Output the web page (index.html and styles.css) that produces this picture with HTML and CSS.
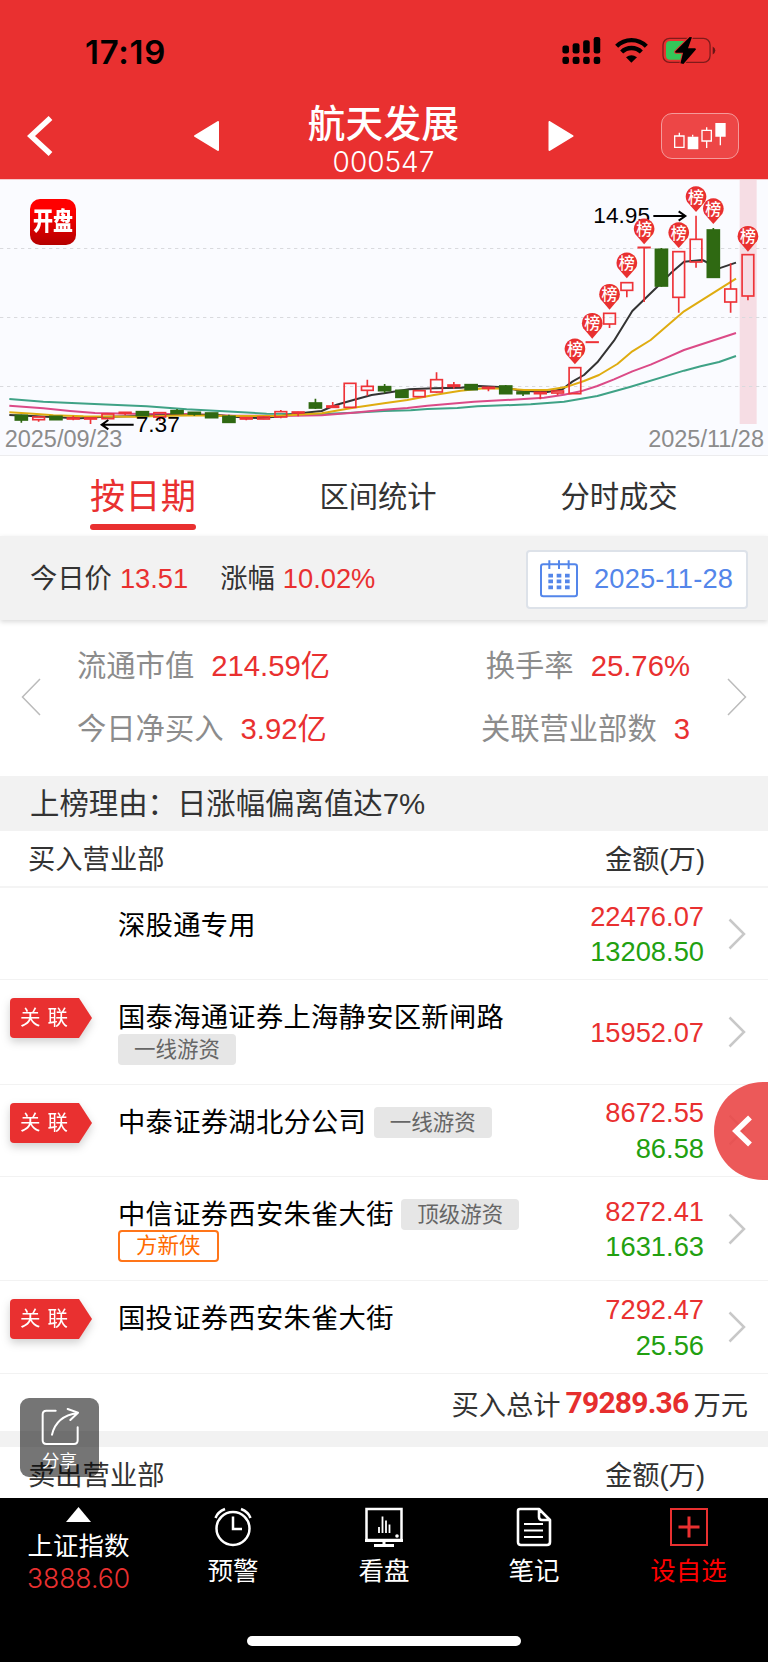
FILE: index.html
```html
<!DOCTYPE html>
<html lang="zh-CN">
  <head>
    <meta charset="utf-8">
    <title>航天发展 000547</title>
    <meta name="viewport" content="width=device-width, initial-scale=1">
    <link rel="stylesheet" href="styles.css">
  </head>
  <body>
    <header class="header">
      <div class="status-bar">
        <span class="time">17:19</span>
        <div class="status-icons">
          <svg width="39" height="27" viewBox="0 0 116 82">
            <rect x="0" y="26" width="20" height="24" rx="7"/>
            <rect x="31" y="19" width="21" height="31" rx="7"/>
            <rect x="63" y="10" width="20" height="40" rx="7"/>
            <rect x="95" y="0" width="20" height="50" rx="7"/>
            <rect x="0" y="60" width="20" height="22" rx="7"/>
            <rect x="31" y="60" width="21" height="22" rx="7"/>
            <rect x="63" y="60" width="20" height="22" rx="7"/>
            <rect x="95" y="60" width="20" height="22" rx="7"/>
          </svg>
          <svg class="wifi" width="33" height="25" viewBox="0 0 99 75">
            <path d="M5 25A63 63 0 0 1 94 25" fill="none" stroke="#000" stroke-width="13"/>
            <path d="M20 42A42 42 0 0 1 79 42" fill="none" stroke="#000" stroke-width="13"/>
            <path d="M33 58Q49 45 66 58L49 74Z"/>
          </svg>
          <svg width="54" height="27" viewBox="0 0 162 82">
            <rect x="2" y="4" width="143" height="73" rx="20" fill="none" stroke="#000" stroke-opacity=".45" stroke-width="4"/>
            <path d="M153 29Q161 34 161 41Q161 48 153 53Z" fill-opacity=".55"/>
            <path d="M24 12H70V69H24Q11 69 11 56V25Q11 12 24 12Z" fill="#34c759"/>
            <path d="M83 0L39 44Q38 47 41 48H63L55 80L64 82L102 38Q103 35 99 34H78L90 1Z" stroke="#e93030" stroke-width="6" paint-order="stroke"/>
          </svg>
        </div>
      </div>
      <div class="nav">
        <svg class="back" width="26" height="40" viewBox="0 0 26 40"><path d="M23.500 2L4 20L23.500 38" fill="none" stroke="#fff" stroke-width="5.500"/></svg>
        <svg class="prev" width="25" height="30" viewBox="0 0 25 30"><path d="M24 1V29L1 15Z" fill="#fff" stroke="#fff" stroke-width="2" stroke-linejoin="round"/></svg>
        <div class="title">
          <h1>航天发展</h1>
          <p>000547</p>
        </div>
        <svg class="next" width="26" height="30" viewBox="0 0 25 30"><path d="M1 1V29L24 15Z" fill="#fff" stroke="#fff" stroke-width="2" stroke-linejoin="round"/></svg>
        <button class="kline-btn">
          <svg width="52" height="28" viewBox="0 0 156 84" fill="none" stroke="#fff" stroke-width="4">
            <path d="M2 42H30V76H2ZM16 32V42M84 25H112V57H84ZM98 16V25M98 57V78M56 38V44M139 42V70"/>
            <path d="M43 46H71V80H43ZM126 5H153V42H126Z" fill="#fff"/>
          </svg>
        </button>
      </div>
    </header>

    <div class="chart">
      <svg id="kline" width="768" height="275" viewBox="0 0 2304 825">
        <rect class="today" x="2219" y="0" width="51" height="732"/>
        <path class="grid-line" d="M0 205.500H2304M0 412.500H2304M0 619.500H2304"/>
        <g class="ma">
          <polyline stroke="#3fa286" points="28,657 130,665 300,673 440,679 560,688 700,695 800,701 965,702 1060,698 1152,693 1232,691 1282,687 1372,684 1432,679 1592,673 1692,665 1792,648 1892,620 2052,572 2102,559 2157,546 2208,528"/>
          <polyline stroke="#db4a87" points="28,677 130,685 210,693 285,699 430,702 560,702 700,707 840,708 965,706 1060,698 1152,689 1222,684 1282,677 1422,665 1502,661 1632,653 1692,644 1742,634 1792,618 1842,598 1897,574 1952,554 2002,532 2052,510 2208,459"/>
          <polyline stroke="#333" points="28,705 110,709 200,713 240,715 300,711 420,708 500,706 640,704 700,710 770,714 830,710 900,700 965,693 1010,674 1060,660 1115,645 1152,640 1227,628 1302,625 1382,623 1437,618 1512,622 1562,632 1642,636 1687,628 1717,605 1752,585 1792,547 1842,482 1897,393 1972,320 2012,280 2052,245 2107,240 2157,265 2208,248"/>
          <polyline stroke="#dfac10" points="28,697 100,701 160,706 250,709 400,710 560,706 700,708 830,708 965,700 1060,683 1152,670 1222,660 1302,645 1382,632 1452,625 1522,626 1572,630 1642,630 1702,620 1752,603 1797,585 1852,552 1897,514 1952,480 2052,394 2208,296"/>
        </g>
        <g id="candles"></g>
        <text class="price" x="1780" y="129">14.95</text>
        <path class="arrow" d="M1960 108H2055M2036 94L2056 108L2036 122"/>
        <g id="pins"></g>
        <text class="price" x="407" y="755">7.37</text>
        <path class="arrow" d="M401 734H306M325 720L305 734L325 748"/>
        <text class="date" x="14" y="801">2025/09/23</text>
        <text class="date" x="2292" y="801" text-anchor="end">2025/11/28</text>
      </svg>
      <div class="logo"><span>开盘</span></div>
    </div>

    <div class="tabs">
      <a class="tab active">按日期</a>
      <a class="tab">区间统计</a>
      <a class="tab">分时成交</a>
    </div>

    <div class="quote">
      <span>今日价</span><b>13.51</b>
      <span class="change">涨幅</span><b>10.02%</b>
      <div class="date-picker">
        <svg width="38" height="38" viewBox="0 0 114 114" fill="none" stroke="#5486ea">
          <rect x="3" y="13" width="108" height="96" rx="7" stroke-width="6"/>
          <path d="M28 1V27M57 1V27M86 1V27" stroke-width="6"/>
          <path d="M25 47H90M25 64H90M25 82H90" stroke-width="11" stroke-dasharray="14 11"/>
        </svg>
        2025-11-28
      </div>
    </div>

    <div class="metrics">
      <svg width="20" height="38" viewBox="0 0 20 38"><path d="M19 1L1.500 19L19 37" fill="none" stroke="#bbb" stroke-width="1.500"/></svg>
      <div class="metrics-col">
        <p>流通市值<b>214.59亿</b></p>
        <p>今日净买入<b>3.92亿</b></p>
      </div>
      <div class="metrics-col right">
        <p>换手率<b>25.76%</b></p>
        <p>关联营业部数<b>3</b></p>
      </div>
      <svg width="20" height="38" viewBox="0 0 20 38"><path d="M1 1L18.500 19L1 37" fill="none" stroke="#bbb" stroke-width="1.500"/></svg>
    </div>

    <div class="reason">上榜理由：日涨幅偏离值达7%</div>

    <div class="list-head"><span>买入营业部</span><span>金额(万)</span></div>

    <div class="row">
      <div class="badge-col"></div>
      <div class="broker"><span>深股通专用</span></div>
      <div class="amount"><span class="buy">22476.07</span><span class="sell">13208.50</span></div>
      <svg class="more" width="18" height="32" viewBox="0 0 18 32"><path d="M1.500 1.500L16 16L1.500 30.500"/></svg>
    </div>
    <div class="row">
      <div class="badge-col"><span class="badge">关联</span></div>
      <div class="broker"><span>国泰海通证券上海静安区新闸路</span><i class="tag">一线游资</i></div>
      <div class="amount"><span class="buy">15952.07</span></div>
      <svg class="more" width="18" height="32" viewBox="0 0 18 32"><path d="M1.500 1.500L16 16L1.500 30.500"/></svg>
    </div>
    <div class="row">
      <div class="badge-col"><span class="badge">关联</span></div>
      <div class="broker"><span>中泰证券湖北分公司</span><i class="tag">一线游资</i></div>
      <div class="amount"><span class="buy">8672.55</span><span class="sell">86.58</span></div>
      <svg class="more" width="18" height="32" viewBox="0 0 18 32"><path d="M1.500 1.500L16 16L1.500 30.500"/></svg>
    </div>
    <div class="row">
      <div class="badge-col"></div>
      <div class="broker"><span>中信证券西安朱雀大街</span><i class="tag">顶级游资</i><i class="tag person">方新侠</i></div>
      <div class="amount"><span class="buy">8272.41</span><span class="sell">1631.63</span></div>
      <svg class="more" width="18" height="32" viewBox="0 0 18 32"><path d="M1.500 1.500L16 16L1.500 30.500"/></svg>
    </div>
    <div class="row">
      <div class="badge-col"><span class="badge">关联</span></div>
      <div class="broker"><span>国投证券西安朱雀大街</span></div>
      <div class="amount"><span class="buy">7292.47</span><span class="sell">25.56</span></div>
      <svg class="more" width="18" height="32" viewBox="0 0 18 32"><path d="M1.500 1.500L16 16L1.500 30.500"/></svg>
    </div>
    <div class="total">买入总计<b>79289.36</b>万元</div>

    <div class="list-head sell-head"><span>卖出营业部</span><span>金额(万)</span></div>

    <!-- floating buttons -->
    <div class="share">
      <svg width="38" height="38" viewBox="0 0 114 114" fill="none" stroke="#fff" stroke-width="6" stroke-linecap="round" stroke-linejoin="round">
        <path d="M44 8H16Q5 8 5 19V97Q5 108 16 108H99Q110 108 110 97V58"/>
        <path d="M33 80C40 50 58 22 110 15M80 3L111 14L88 36"/>
      </svg>
      <span>分享</span>
    </div>
    <div class="drawer-btn">
      <svg width="20" height="32" viewBox="0 0 20 32"><path d="M18 2.500L4 16L18 29.500" fill="none" stroke="#fff" stroke-width="5.500"/></svg>
    </div>

    <footer class="footer">
      <div class="toolbar">
        <div class="tool index">
          <svg width="25" height="15" viewBox="0 0 25 15"><path d="M12.500 0L25 15H0Z" fill="#fff"/></svg>
          <span>上证指数</span>
          <em>3888.60</em>
        </div>
        <div class="tool">
          <svg width="38" height="40" viewBox="0 0 38 40" fill="none" stroke="#fff" stroke-width="2.500">
            <circle cx="19" cy="21.500" r="16.500"/>
            <path d="M19 9.500V22H28M1.500 11Q3.500 5 11 2M36.500 11Q34.500 5 27 2"/>
          </svg>
          <span>预警</span>
        </div>
        <div class="tool">
          <svg width="38" height="40" viewBox="0 0 38 40" fill="none" stroke="#fff" stroke-width="2.500">
            <rect x="1.500" y="2" width="35" height="31"/>
            <path d="M0 33.500H38M19 34V38M9 38.500H29" stroke-width="3"/>
            <path d="M14 26V20M17.500 26V9.500M21 26V13.500M24.500 26V17.500" stroke-width="1.800"/>
            <circle cx="32" cy="29" r="1.800" fill="#fff" stroke="none"/>
          </svg>
          <span>看盘</span>
        </div>
        <div class="tool">
          <svg width="36" height="40" viewBox="0 0 36 40" fill="none" stroke="#fff" stroke-width="2.600" stroke-linejoin="round">
            <path d="M4 2H23L34 13V35Q34 38 31 38H5Q2 38 2 35V4Q2 2 4 2ZM23 2V10Q23 13 26 13H34"/>
            <path d="M8 17H27M8 23.500H27M8 30H27" stroke-width="2"/>
          </svg>
          <span>笔记</span>
        </div>
        <div class="tool add">
          <svg width="38" height="40" viewBox="0 0 38 40" fill="none" stroke="#e93030">
            <rect x="1" y="2" width="36" height="36" stroke-width="2"/>
            <path d="M19 9.500V30.500M8.500 20H29.500" stroke-width="3"/>
          </svg>
          <span>设自选</span>
        </div>
      </div>
      <div class="home-bar"></div>
    </footer>

    <script>
      // [type, body top, body bottom, high, low] - r = up, g = down
      const candles = [
        ['g', 706, 720, 704, 728], ['r', 711, 719, 709, 725], ['g', 709, 719, 709, 719],
        ['r', 714, 717, 707, 721], ['r', 714, 717, 713, 732], ['r', 702, 716, 701, 717],
        ['r', 697, 700, 696, 706], ['g', 695, 707, 695, 707], ['r', 698, 711, 697, 722],
        ['g', 692, 700, 687, 702], ['g', 697, 702, 696, 707], ['g', 699, 713, 699, 713],
        ['g', 709, 727, 704, 727], ['r', 713, 717, 712, 721], ['r', 711, 717, 709, 718],
        ['r', 695, 711, 690, 715], ['r', 696, 699, 695, 709], ['g', 669, 684, 656, 687],
        ['r', 678, 682, 666, 684], ['r', 610, 682, 609, 683], ['r', 619, 631, 599, 647],
        ['g', 620, 632, 612, 640], ['g', 631, 652, 630, 652], ['r', 632, 650, 631, 651],
        ['r', 599, 636, 577, 638], ['r', 615, 619, 606, 626], ['g', 614, 629, 613, 629],
        ['r', 622, 625, 620, 634], ['g', 618, 641, 615, 641], ['g', 636, 641, 635, 648],
        ['r', 637, 641, 635, 658], ['r', 633, 639, 632, 646], ['r', 563, 641, 563, 641],
        ['r', 486, 487, 486, 487], ['r', 400, 432, 400, 444], ['r', 308, 331, 308, 352],
        ['r', 202, 203, 202, 366], ['g', 208, 318, 204, 320], ['r', 215, 352, 214, 398],
        ['r', 178, 246, 107, 263], ['g', 150, 292, 144, 294], ['r', 327, 366, 250, 398],
        ['r', 224, 348, 224, 361]
      ];
      // candle index -> y of the pin centre
      const pins = { 32: 507, 33: 430, 34: 343, 35: 249, 36: 147, 38: 158, 39: 50, 40: 86, 42: 169 };
      const xOf = i => 64 + i * 51.9;

      document.getElementById('candles').innerHTML = candles.map(([type, top, bottom, high, low], i) => {
        const x = xOf(i);
        const w = type === 'g' ? 36 : 35;
        return `<g class="${type}">
          <path d="M${x} ${high}V${top}M${x} ${bottom}V${low}"/>
          <rect x="${x - w / 2}" y="${top}" width="${w}" height="${bottom - top}"/>
        </g>`;
      }).join('');

      document.getElementById('pins').innerHTML = Object.keys(pins).map(i => {
        const x = xOf(i);
        const y = pins[i];
        return `<path class="pin" d="M${x - 27} ${y + 15}A31 31 0 1 1 ${x + 27} ${y + 15}Q${x + 14} ${y + 30} ${x} ${y + 46}Q${x - 14} ${y + 30} ${x - 27} ${y + 15}Z"/>
          <text class="pin-text" x="${x}" y="${y + 18}">榜</text>`;
      }).join('');
    </script>
  </body>
</html>
```
FILE: styles.css
```css
* {
    box-sizing: border-box;
}

body {
    position: relative;
    width: 768px;
    height: 1663px;
    margin: 0;
    overflow: hidden;
    background: #fff;
    color: #333;
    font-family: "Liberation Sans", "Noto Sans CJK SC", sans-serif;
    font-size: 27.3px;
}

h1, p {
    margin: 0;
}

svg {
    display: block;
    flex-shrink: 0;
}

b, i, em {
    font-weight: 400;
    font-style: normal;
}

/* header */
.header {
    height: 180px;
    background: #e93030;
    border-bottom: 1px solid #f5c9cc;
}

.status-bar {
    display: flex;
    justify-content: space-between;
    height: 93px;
    padding: 0 52px 0 85px;
}

.time {
    margin-top: 32px;
    color: #000;
    font: 600 33px/40px Inter, sans-serif;
    letter-spacing: 0.7px;
}

.status-icons {
    display: flex;
    align-items: flex-start;
    gap: 14px;
    padding-top: 37px;
}

.wifi {
    margin-top: 1px;
}

.nav {
    display: flex;
    align-items: center;
    height: 86px;
    padding: 0 29px 0 27px;
}

.prev {
    margin-left: 141px;
}

.title {
    flex: 1;
    padding-top: 7px;
    color: #fff;
    text-align: center;
}

.title h1 {
    font-size: 37.5px;
    font-weight: 500;
    line-height: 44px;
    letter-spacing: 0.4px;
}

.title p {
    font: 300 28px/32px Inter, sans-serif;
}

.kline-btn {
    display: flex;
    align-items: center;
    justify-content: center;
    width: 78px;
    height: 46px;
    margin-left: 87px;
    padding: 0;
    border: 1px solid #f49a9a;
    border-radius: 11px;
    background: #ed4646;
}

/* k-line chart */
.chart {
    position: relative;
    height: 276px;
    background: #fafbff;
    border-bottom: 1px solid #ececee;
}

.logo {
    position: absolute;
    top: 19px;
    left: 30px;
    width: 46px;
    height: 46px;
    border-radius: 10px;
    background: linear-gradient(#ff0000 25%, #b40000);
    color: #fff;
    font-size: 20px;
    font-weight: 900;
    line-height: 45px;
    text-align: center;
}

.logo span {
    display: block;
    transform: scaleY(1.25);
}

.today {
    fill: #f6dde4;
}

.grid-line {
    stroke: #d9dade;
    stroke-width: 3;
    stroke-dasharray: 10 11;
}

.ma polyline {
    fill: none;
    stroke-width: 6;
    stroke-linejoin: round;
}

.r {
    fill: none;
    stroke: #ee3338;
    stroke-width: 5;
}

.g {
    fill: #2f6912;
    stroke: #2f6912;
    stroke-width: 5;
}

.price {
    fill: #000;
    font-size: 68px;
}

.date {
    fill: #8c8c8c;
    font-size: 70.5px;
}

.arrow {
    fill: none;
    stroke: #000;
    stroke-width: 6;
}

.pin {
    fill: #e93030;
}

.pin-text {
    fill: #fff;
    font-size: 48px;
    font-weight: 500;
    text-anchor: middle;
}

/* tabs */
.tabs {
    display: grid;
    grid-template-columns: 286px 184px 298px;
    justify-items: center;
    height: 80px;
}

.tab {
    height: 74px;
    font-size: 29.3px;
    line-height: 81px;
}

.tab.active {
    color: #e93030;
    font-size: 35.3px;
}

.tab.active::after {
    content: "";
    display: block;
    height: 6px;
    margin-top: -13px;
    border-radius: 3px;
    background: #e93030;
}

/* price bar */
.quote {
    position: relative;
    display: flex;
    align-items: center;
    height: 84px;
    padding: 2px 20px 0 30px;
    background: #f2f2f2;
    box-shadow: 0 2px 5px rgba(0, 0, 0, 0.15);
    line-height: 40px;
}

.quote b {
    margin-left: 8px;
    color: #e93030;
}

.change {
    margin-left: 32px;
}

.date-picker {
    display: flex;
    align-items: center;
    gap: 16px;
    width: 222px;
    height: 59px;
    margin-left: auto;
    padding-left: 12px;
    border: 2px solid #dde2e9;
    border-radius: 4px;
    background: #fff;
    color: #5486ea;
    letter-spacing: 0.15px;
    white-space: nowrap;
}

/* metrics */
.metrics {
    display: flex;
    align-items: center;
    height: 156px;
    padding: 0 21px 2px;
    color: #8c8c8c;
    font-size: 29.3px;
}

.metrics-col {
    margin-left: 36px;
    line-height: 63.5px;
}

.metrics-col.right {
    margin-left: auto;
    margin-right: 37px;
    text-align: right;
}

.metrics b {
    margin-left: 17px;
    color: #e93030;
}

.reason {
    height: 55px;
    padding-left: 30px;
    background: #f2f2f2;
    font-size: 29.4px;
    line-height: 55px;
}

/* broker list */
.list-head {
    display: flex;
    justify-content: space-between;
    height: 57px;
    padding: 0 63px 0 28px;
    border-bottom: 2px solid #f4f4f4;
    line-height: 57px;
}

.row {
    display: flex;
    min-height: 92.4px;
    border-bottom: 1.5px solid #f2f2f2;
}

.badge-col {
    width: 118px;
    padding: 18px 0 0 10px;
}

.badge {
    position: relative;
    display: block;
    width: 69px;
    height: 40px;
    padding-left: 10px;
    border-radius: 4px 0 0 4px;
    background: #e93030;
    color: #fff;
    filter: drop-shadow(0 4px 4px rgba(0, 0, 0, 0.18));
    font-size: 20.5px;
    letter-spacing: 7px;
    line-height: 40px;
    white-space: nowrap;
}

.badge::after {
    content: "";
    position: absolute;
    top: 0;
    left: 69px;
    border: solid transparent;
    border-width: 20px 0 20px 13px;
    border-left-color: #e93030;
}

.broker {
    display: flex;
    flex-wrap: wrap;
    align-content: flex-start;
    column-gap: 7.5px;
    width: 450px;
    padding: 22px 0 18.5px;
    color: #000;
    letter-spacing: 0.28px;
    line-height: 32.6px;
}

.broker span {
    height: 31.4px;
}

.tag {
    height: 31.4px;
    padding: 0 16px;
    border-radius: 4px;
    background: #e6e6e6;
    color: #666;
    font-size: 21.5px;
    letter-spacing: 0;
}

.tag.person {
    border: 2px solid #ff7519;
    background: #fff;
    color: #ff6a00;
    line-height: 29px;
}

.amount {
    display: flex;
    flex-direction: column;
    justify-content: center;
    width: 136px;
    padding-top: 1px;
    line-height: 35.5px;
    text-align: right;
}

.buy {
    color: #e93030;
}

.sell {
    color: #22a010;
}

.more {
    align-self: center;
    margin-left: 24px;
    fill: none;
    stroke: #c8c8c8;
    stroke-width: 2.5;
}

.total {
    display: flex;
    align-items: center;
    justify-content: flex-end;
    height: 57px;
    padding: 2px 20px 0 0;
}

.total b {
    margin: 0 5px;
    color: #e62e2e;
    font: 700 30px/40px Roboto, sans-serif;
    letter-spacing: -0.8px;
}

.sell-head {
    height: 68px;
    border-top: 16px solid #f2f2f2;
    border-bottom: 0;
}

/* floating buttons */
.share {
    position: absolute;
    top: 1398px;
    left: 20px;
    display: flex;
    flex-direction: column;
    align-items: center;
    width: 79px;
    height: 79px;
    padding-top: 10px;
    border-radius: 9px;
    background: rgba(0, 0, 0, 0.54);
    color: #fff;
    font-size: 17.5px;
    line-height: 31px;
}

.drawer-btn {
    position: absolute;
    top: 1082px;
    right: 0;
    width: 54px;
    height: 98px;
    padding: 33px 0 0 18px;
    border-radius: 49px 0 0 49px;
    background: rgba(234, 72, 72, 0.91);
}

/* bottom toolbar */
.footer {
    position: absolute;
    top: 1498px;
    left: 0;
    width: 768px;
    height: 164px;
    background: #000;
    color: #fff;
}

.toolbar {
    display: grid;
    grid-template-columns: 157px 152px 150px 150px 159px;
    height: 138px;
    font-size: 25.5px;
}

.tool {
    display: flex;
    flex-direction: column;
    align-items: center;
    padding-top: 9px;
    line-height: 40px;
}

.tool span {
    margin-top: 4px;
}

.tool em {
    margin-top: -11px;
    color: #e93030;
    font: 300 26.5px/46px Inter, sans-serif;
}

.tool.add span {
    color: #f00;
}

.home-bar {
    width: 274px;
    height: 10px;
    margin: 0 auto;
    border-radius: 5px;
    background: #fff;
}
```
